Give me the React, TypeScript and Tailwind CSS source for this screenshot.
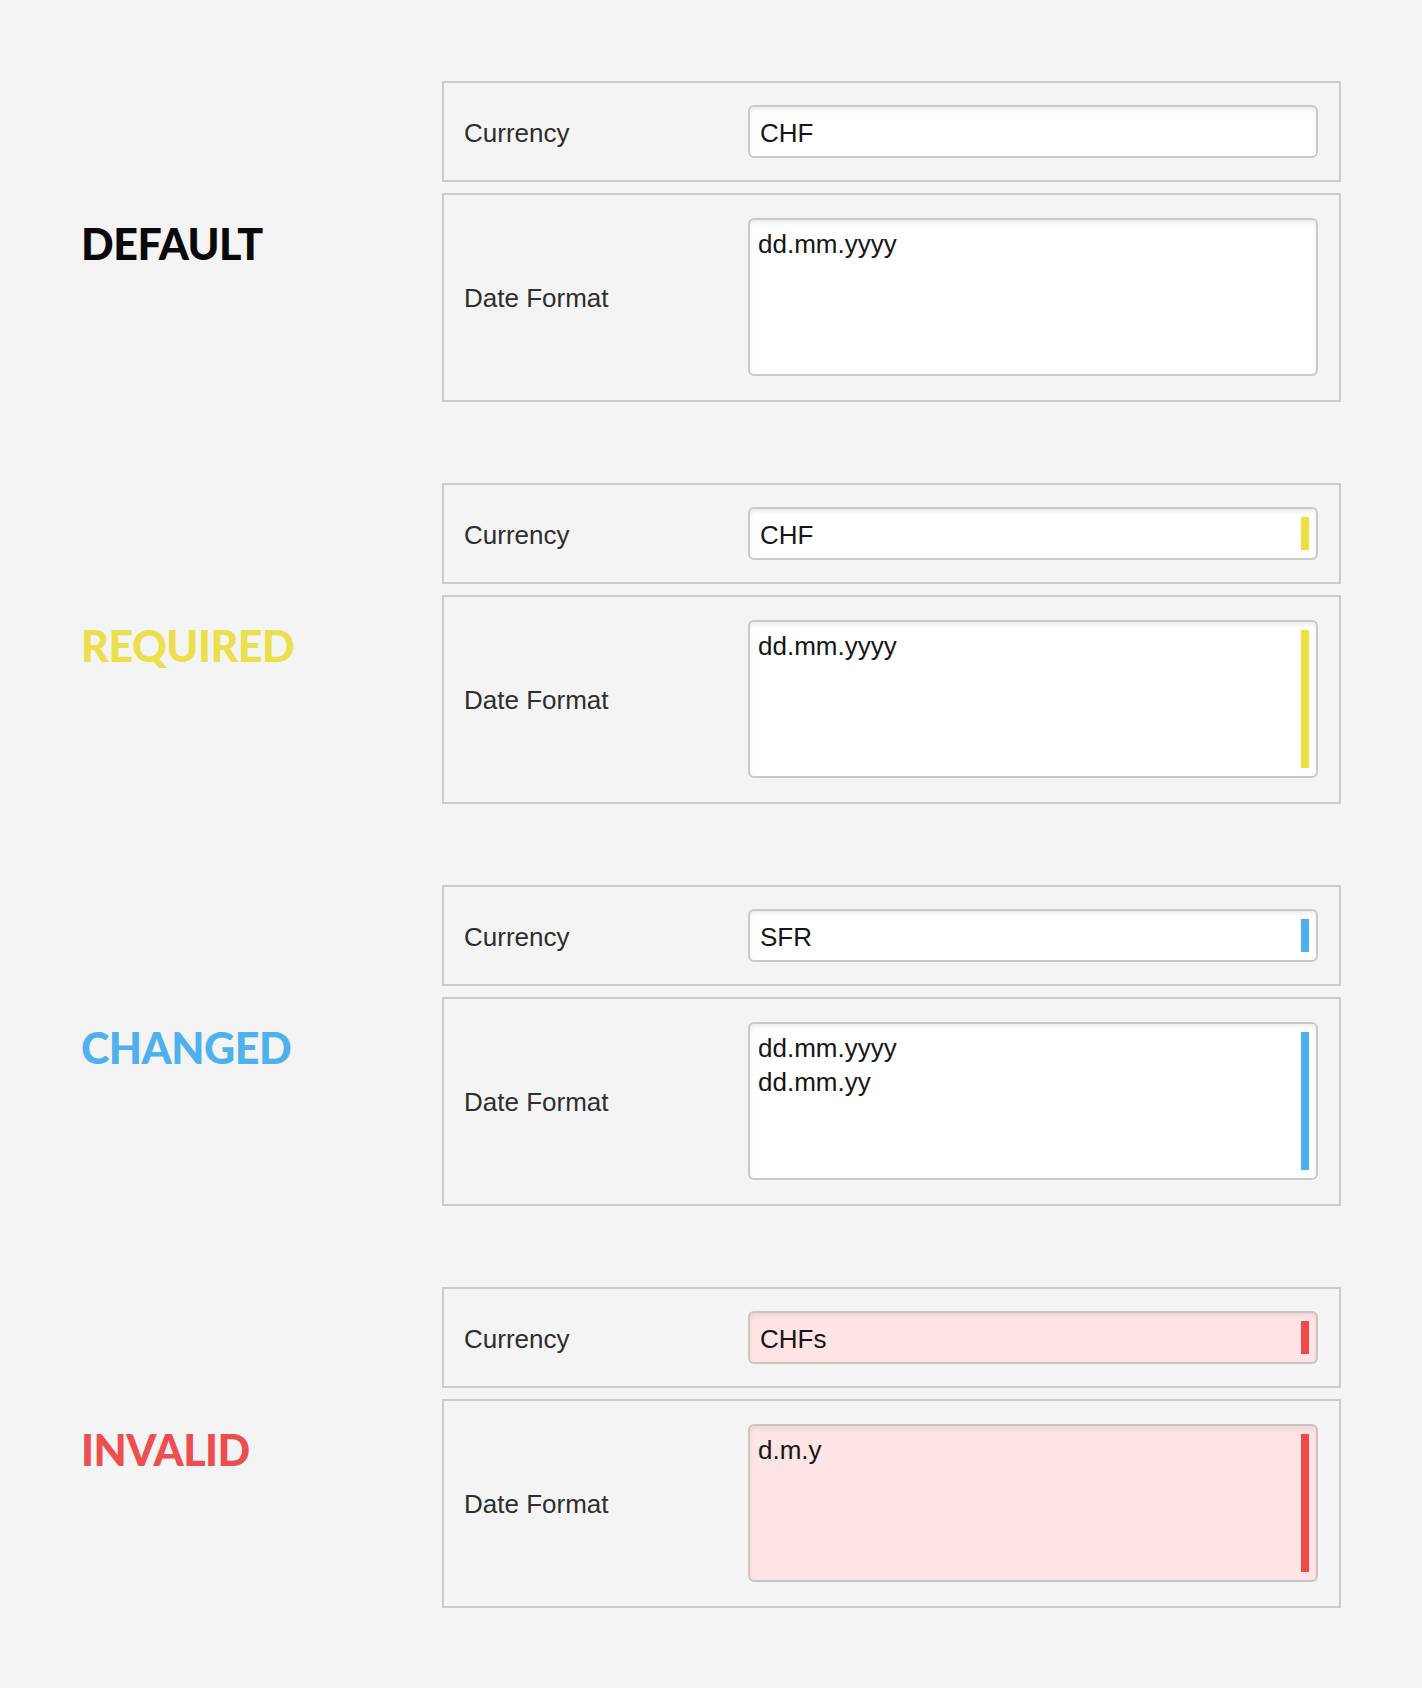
import React from 'react'

type State = 'default' | 'required' | 'changed' | 'invalid'

const sections: { state: State; title: string; currency: string; dates: string }[] = [
  { state: 'default', title: 'DEFAULT', currency: 'CHF', dates: 'dd.mm.yyyy' },
  { state: 'required', title: 'REQUIRED', currency: 'CHF', dates: 'dd.mm.yyyy' },
  { state: 'changed', title: 'CHANGED', currency: 'SFR', dates: 'dd.mm.yyyy\ndd.mm.yy' },
  { state: 'invalid', title: 'INVALID', currency: 'CHFs', dates: 'd.m.y' },
]

const titleColor: Record<State, string> = {
  default: 'text-[#0a0a0a]',
  required: 'text-[#ebdf4d]',
  changed: 'text-[#4eb0ec]',
  invalid: 'text-[#ec4f51]',
}

const barColor: Record<State, string> = {
  default: '',
  required: 'bg-[#ece03f]',
  changed: 'bg-[#4aaef0]',
  invalid: 'bg-[#ee4a4a]',
}

const fieldBase =
  'block w-full border-2 rounded-[6px] shadow-[inset_0_3px_4px_rgba(0,0,0,0.07)] text-[26px] text-[#161616] outline-none font-["Liberation_Sans",Arial,sans-serif]'

function Bar({ state }: { state: State }) {
  if (state === 'default') return null
  return <span className={`absolute right-[9px] top-[10px] bottom-[10px] w-[8px] ${barColor[state]}`} />
}

function Row({ label, children, tall }: { label: string; children: React.ReactNode; tall?: boolean }) {
  return (
    <div
      className={`flex items-center border-2 border-[#cbcbcb] pl-[20px] pr-[21px] ${
        tall ? 'pt-[23px] pb-[24px]' : 'py-[22px]'
      }`}
    >
      <label className={`w-[284px] shrink-0 text-[26px] text-[#2e2e2e] ${tall ? 'pt-[2px]' : 'pt-[4px]'}`}>
        {label}
      </label>
      <div className="relative flex-1">{children}</div>
    </div>
  )
}

function Section({ s }: { s: (typeof sections)[number] }) {
  const invalid = s.state === 'invalid'
  const bg = invalid ? 'bg-[#fee4e5] border-[#cdc3c3]' : 'bg-white border-[#c9c9c9]'
  return (
    <div className="flex items-center">
      <h2
        className={`w-[442px] shrink-0 pl-[81px] pt-[3px] font-['Lato',sans-serif] font-black text-[43px] leading-none tracking-[-0.5px] ${titleColor[s.state]}`}
      >
        {s.title}
      </h2>
      <div className="w-[899px] flex flex-col gap-[11px]">
        <Row label="Currency">
          <input readOnly value={s.currency} className={`${fieldBase} ${bg} h-[53px] pt-[4px] px-[10px]`} />
          <Bar state={s.state} />
        </Row>
        <Row label="Date Format" tall>
          <textarea
            readOnly
            value={s.dates}
            className={`${fieldBase} ${bg} h-[158px] resize-none leading-[34px] pt-[7px] px-[8px] overflow-hidden`}
          />
          <Bar state={s.state} />
        </Row>
      </div>
    </div>
  )
}

export default function App() {
  return (
    <div className="min-h-[1688px] w-[1422px] bg-[#f4f4f4] py-[81px] flex flex-col gap-[81px] font-['Liberation_Sans',Arial,sans-serif]">
      {sections.map((s) => (
        <Section key={s.state} s={s} />
      ))}
    </div>
  )
}
